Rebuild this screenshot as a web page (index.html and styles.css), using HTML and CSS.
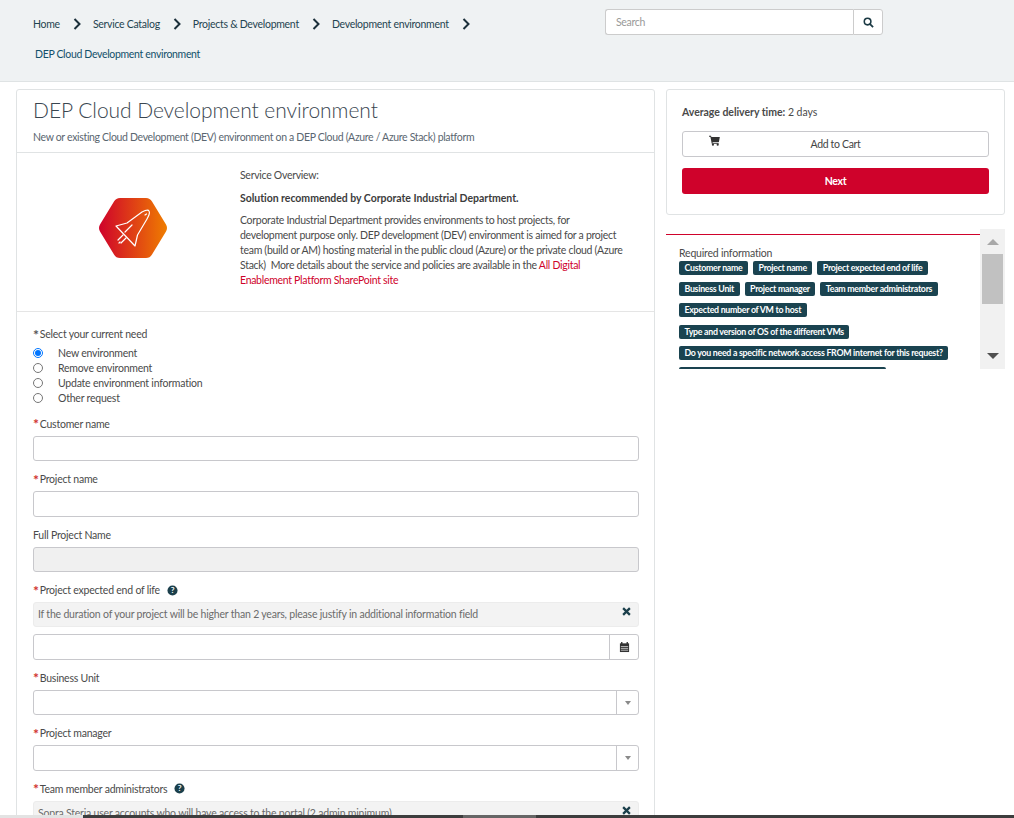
FILE: index.html
```html
<!DOCTYPE html>
<html lang="en">
<head>
    <meta charset="UTF-8">
    <title>DEP Cloud Development environment</title>
    <link rel="stylesheet" href="styles.css">
</head>
<body>
    <header class="topbar">
        <nav class="crumbs">
            <div class="crumb-row">
                <a>Home</a><svg class="chev" viewBox="0 0 8 12"><path d="M1.5 1l5 5-5 5" /></svg>
                <a>Service Catalog</a><svg class="chev" viewBox="0 0 8 12"><path d="M1.5 1l5 5-5 5" /></svg>
                <a>Projects &amp; Development</a><svg class="chev" viewBox="0 0 8 12"><path d="M1.5 1l5 5-5 5" /></svg>
                <a>Development environment</a><svg class="chev" viewBox="0 0 8 12"><path d="M1.5 1l5 5-5 5" /></svg>
            </div>
            <div class="crumb-current">DEP Cloud Development environment</div>
        </nav>
        <div class="search">
            <input class="search-input" type="text" placeholder="Search">
            <button class="search-btn">
                <svg viewBox="0 0 12 12" width="11" height="11"><circle cx="5" cy="5" r="3.6" fill="none" stroke="#1b3a44" stroke-width="1.7"/><path d="M7.7 7.7l3.3 3.3" stroke="#1b3a44" stroke-width="2"/></svg>
            </button>
        </div>
    </header>

    <main class="page">
        <section class="card main-card">
            <div class="card-head">
                <h1>DEP Cloud Development environment</h1>
                <p>New or existing Cloud Development (DEV) environment on a DEP Cloud (Azure / Azure Stack) platform</p>
            </div>
            <div class="overview">
                <div class="logo-col">
                    <svg width="68" height="60" viewBox="0 0 68 60">
                        <defs>
                            <linearGradient id="hexfill" x1="0" y1="0" x2="1" y2="0">
                                <stop offset="0" stop-color="#cf022b"/>
                                <stop offset="1" stop-color="#ef7d00"/>
                            </linearGradient>
                        </defs>
                        <path d="M21 0h26q4 0 6 3.500l14 23q2 3.500 0 7l-14 23q-2 3.500-6 3.500h-26q-4 0-6-3.500l-14-23q-2-3.500 0-7l14-23q2-3.500 6-3.500z" fill="url(#hexfill)"/>
                        <g fill="none" stroke="#fff" stroke-width="1.200" stroke-linejoin="round" stroke-linecap="round">
                            <path d="M17 28L28 25 43 14Q49 11 50 13 51.500 15 48 21L38.500 37 36 48z"/>
                            <path d="M33 27l-7 7M46 17l1.500-1"/>
                            <path d="M19 42l5-5M22 45l5-5M20 45l1-1"/>
                        </g>
                    </svg>
                </div>
                <div class="overview-text">
                    <p>Service Overview:</p>
                    <p class="solution"><strong>Solution recommended by Corporate Industrial Department.</strong></p>
                    <p>Corporate Industrial Department provides environments to host projects, for<br>development purpose only. DEP development (DEV) environment is aimed for a project team (build or AM) hosting material in the public cloud (Azure) or the private cloud (Azure Stack)&nbsp; More details about the service and policies are available in the <a>All Digital Enablement Platform SharePoint site</a></p>
                </div>
            </div>
            <form class="form">
                <div class="field need">
                    <label><span class="star grey">*</span>Select your current need</label>
                    <div class="radio"><input type="radio" name="need" checked><span>New environment</span></div>
                    <div class="radio"><input type="radio" name="need"><span>Remove environment</span></div>
                    <div class="radio"><input type="radio" name="need"><span>Update environment information</span></div>
                    <div class="radio"><input type="radio" name="need"><span>Other request</span></div>
                </div>
                <div class="field">
                    <label><span class="star">*</span>Customer name</label>
                    <div class="control"></div>
                </div>
                <div class="field">
                    <label><span class="star">*</span>Project name</label>
                    <div class="control"></div>
                </div>
                <div class="field">
                    <label>Full Project Name</label>
                    <div class="control disabled"></div>
                </div>
                <div class="field">
                    <label><span class="star">*</span>Project expected end of life
                        <svg class="help" viewBox="0 0 12 12"><circle cx="6" cy="6" r="5.500"/><text x="6" y="9.200" text-anchor="middle">?</text></svg>
                    </label>
                    <div class="hint">If the duration of your project will be higher than 2 years, please justify in additional information field
                        <svg class="close" viewBox="0 0 8 8"><path d="M1 1l6 6M7 1l-6 6"/></svg>
                    </div>
                    <div class="control with-addon">
                        <span class="addon">
                            <svg viewBox="0 0 12 12" width="11" height="12"><path d="M1 2h10v9.500H1z" fill="#333"/><path d="M3 .5v2.500M9 .5v2.500" stroke="#333" stroke-width="1.500"/><path d="M2 5.500h8M2 7.500h8M2 9.500h8" stroke="#fff" stroke-width=".7"/></svg>
                        </span>
                    </div>
                </div>
                <div class="field">
                    <label><span class="star">*</span>Business Unit</label>
                    <div class="control select"><span class="addon small"><i class="caret"></i></span></div>
                </div>
                <div class="field">
                    <label><span class="star">*</span>Project manager</label>
                    <div class="control select"><span class="addon small"><i class="caret"></i></span></div>
                </div>
                <div class="field">
                    <label><span class="star">*</span>Team member administrators
                        <svg class="help" viewBox="0 0 12 12"><circle cx="6" cy="6" r="5.500"/><text x="6" y="9.200" text-anchor="middle">?</text></svg>
                    </label>
                    <div class="hint">Sopra Steria user accounts who will have access to the portal (2 admin minimum)
                        <svg class="close" viewBox="0 0 8 8"><path d="M1 1l6 6M7 1l-6 6"/></svg>
                    </div>
                </div>
            </form>
        </section>

        <aside class="side">
            <section class="card order">
                <p class="delivery"><strong>Average delivery time:</strong> 2 days</p>
                <button class="btn-cart">
                    <svg viewBox="0 0 12 12" width="11" height="11"><path d="M0 .8h2.200l.4 1.400H11.800l-1 5.300H3.800l.3 1H10.500v1H3L1.500 1.800H0z" fill="#333"/><circle cx="4.300" cy="10.600" r="1.200" fill="#333"/><circle cx="9.500" cy="10.600" r="1.200" fill="#333"/></svg>
                    Add to Cart
                </button>
                <button class="btn-next">Next</button>
            </section>
            <section class="required">
                <div class="required-body">
                    <div class="required-title">Required information</div>
                    <div class="tags">
                        <span class="tag">Customer name</span>
                        <span class="tag">Project name</span>
                        <span class="tag">Project expected end of life</span>
                        <span class="tag">Business Unit</span>
                        <span class="tag">Project manager</span>
                        <span class="tag">Team member administrators</span>
                        <span class="tag">Expected number of VM to host</span>
                        <span class="tag">Type and version of OS of the different VMs</span>
                        <span class="tag">Do you need a specific network access FROM internet for this request?</span>
                        <span class="tag">Do you need specific network access TO the internet?</span>
                    </div>
                </div>
                <div class="scrollbar">
                    <i class="arrow up"></i>
                    <div class="track"><div class="thumb"></div></div>
                    <i class="arrow down"></i>
                </div>
            </section>
        </aside>
    </main>

    <div class="bottom-strip">
        <span class="strip-start"></span>
        <span class="strip-dark"></span>
        <span class="strip-mid"></span>
        <span class="strip-end"></span>
    </div>
</body>
</html>
```

FILE: styles.css
```css
html, body {
    height: 100%;
    overflow: hidden;
}
body {
    margin: 0;
    font-family: "Lato", sans-serif;
    font-size: 10.5px;
    letter-spacing: -0.33px;
    color: #4a4a4a;
    background-color: #fff;
}
p {
    margin: 0;
}

/* barra superior */
.topbar {
    display: flex;
    height: 81px;
    background-color: #eff2f3;
    border-bottom: 1px solid #dfe3e4;
}
.crumbs {
    box-sizing: border-box;
    width: 605px;
    padding: 17px 0 0 33px;
    letter-spacing: -0.28px;
    color: #1f4450;
}
.crumb-row {
    display: flex;
    align-items: center;
    height: 14px;
}
.chev {
    width: 8px;
    height: 12px;
    margin: 0 12px 0 13px;
    fill: none;
    stroke: #1b2f3a;
    stroke-width: 2;
}
.crumb-current {
    margin: 17px 0 0 2px;
    letter-spacing: -0.33px;
    color: #12506a;
}
.search {
    display: flex;
    width: 278px;
    height: 26px;
    margin-top: 9px;
}
.search-input {
    flex: 1;
    min-width: 0;
    padding: 0 10px;
    font: inherit;
    letter-spacing: inherit;
    border: 1px solid #ccc;
    border-right: none;
    border-radius: 3px 0 0 3px;
}
.search-input::placeholder {
    color: #999;
}
.search-btn {
    display: flex;
    align-items: center;
    justify-content: center;
    width: 30px;
    padding: 0;
    background-color: #fff;
    border: 1px solid #ccc;
    border-radius: 0 3px 3px 0;
}

/* contenido */
.page {
    display: flex;
    align-items: flex-start;
    padding: 7px 9px 0 16px;
    gap: 11px;
}
.card {
    background-color: #fff;
    border: 1px solid #e0e3e4;
    border-radius: 3px;
}
.main-card {
    width: 637px;
    flex: none;
}
.card-head {
    height: 62px;
    padding: 0 16px;
    border-bottom: 1px solid #e0e3e4;
}
.card-head h1 {
    margin: 0;
    padding-top: 6px;
    font-size: 21px;
    line-height: 27px;
    font-weight: 300;
    letter-spacing: -0.06px;
    color: #3a4650;
}
.card-head p {
    margin-top: 8px;
    color: #5a6670;
}
.overview {
    display: flex;
    height: 158px;
    border-bottom: 1px solid #e5e5e5;
}
.logo-col {
    width: 223px;
    padding: 45px 0 0 82px;
    box-sizing: border-box;
}
.overview-text {
    width: 392px;
    padding-top: 15px;
    letter-spacing: -0.29px;
}
.overview-text p {
    margin-bottom: 8px;
    line-height: 15px;
}
.overview-text .solution {
    margin-bottom: 7px;
}
.overview-text strong {
    letter-spacing: -0.03px;
    color: #3c3c3c;
}
.overview-text a {
    color: #cf022b;
}

/* formulario */
.form {
    padding: 13px 15px 0 16px;
    letter-spacing: -0.22px;
}
.field {
    margin-bottom: 9px;
}
.field label {
    box-sizing: border-box;
    display: flex;
    align-items: center;
    height: 16px;
    margin-bottom: 5px;
    padding-top: 2px;
}
.star {
    margin-right: 1px;
    font-size: 14px;
    font-weight: 700;
    color: #d0312d;
    line-height: 11px;
}
.star.grey {
    color: #555;
}
.help {
    width: 11px;
    height: 11px;
    margin-left: 7px;
}
.help circle {
    fill: #1b3f4b;
}
.help text {
    fill: #fff;
    font-size: 9px;
    font-weight: 700;
}
.radio {
    display: flex;
    align-items: center;
    height: 15px;
}
.radio input {
    width: 10px;
    height: 10px;
    margin: 0 15px 0 0;
}
.need label {
    margin-bottom: 4px;
}
.need {
    margin-bottom: 9.75px;
}
.control {
    box-sizing: border-box;
    display: flex;
    justify-content: flex-end;
    height: 25.5px;
    border: 1px solid #c8c8cc;
    border-radius: 3px;
}
.control.disabled {
    background-color: #f0f0f0;
}
.addon {
    display: flex;
    align-items: center;
    justify-content: center;
    width: 28px;
    border-left: 1px solid #c8c8cc;
}
.addon.small {
    width: 21px;
}
.caret {
    width: 0;
    height: 0;
    border-left: 3px solid transparent;
    border-right: 3px solid transparent;
    border-top: 4px solid #8a8a8a;
}
.hint {
    box-sizing: border-box;
    position: relative;
    height: 25px;
    margin-bottom: 7px;
    padding-left: 4px;
    line-height: 22px;
    letter-spacing: -0.2px;
    color: #6b6b6b;
    background-color: #f3f3f3;
    border: 1px solid #ececec;
    border-radius: 3px;
}
.close {
    position: absolute;
    top: 4px;
    right: 7px;
    width: 9px;
    height: 9px;
    fill: none;
    stroke: #1b3f4b;
    stroke-width: 2;
}

/* columna derecha */
.side {
    width: 339px;
    flex: none;
}
.order {
    height: 124px;
    padding: 0 15px;
}
.delivery {
    padding-top: 15px;
    line-height: 15px;
    letter-spacing: -0.03px;
}
.btn-cart {
    position: relative;
    display: block;
    width: 100%;
    height: 26px;
    margin-top: 11px;
    font: inherit;
    letter-spacing: inherit;
    color: #444;
    background-color: #fff;
    border: 1px solid #c8c8cc;
    border-radius: 3px;
}
.btn-cart svg {
    position: absolute;
    left: 26px;
    top: 3px;
}
.btn-next {
    display: block;
    width: 100%;
    height: 26px;
    margin-top: 11px;
    font: inherit;
    font-weight: 700;
    letter-spacing: inherit;
    color: #fff;
    background-color: #cf022b;
    border: none;
    border-radius: 3px;
}
.required {
    display: flex;
    height: 140px;
    margin-top: 14px;
    overflow: hidden;
}
.required-body {
    width: 314px;
    margin-top: 5px;
    padding: 11px 0 0 13px;
    box-sizing: border-box;
    border-top: 1px solid #cf022b;
    overflow: hidden;
}
.required-title {
    line-height: 14px;
    margin-bottom: 1px;
    letter-spacing: -0.2px;
}
.tags {
    display: flex;
    flex-wrap: wrap;
    column-gap: 5px;
    row-gap: 7.2px;
}
.tag {
    height: 14px;
    padding: 0 5.5px;
    font-size: 8.8px;
    font-weight: 700;
    letter-spacing: -0.28px;
    line-height: 14px;
    color: #fff;
    background-color: #1a4350;
    border-radius: 2px;
    white-space: nowrap;
}
.scrollbar {
    display: flex;
    flex-direction: column;
    align-items: center;
    width: 25px;
    background-color: #f1f1f1;
}
.track {
    flex: 1;
    width: 21px;
    padding-top: 9px;
}
.thumb {
    height: 50px;
    background-color: #c1c1c1;
}
.arrow {
    width: 0;
    height: 0;
    border-left: 6px solid transparent;
    border-right: 6px solid transparent;
}
.arrow.up {
    margin-top: 10px;
    border-bottom: 6px solid #a8a8a8;
}
.arrow.down {
    margin-bottom: 10px;
    border-top: 6px solid #505050;
}

/* franja inferior, sobre el contenido */
.bottom-strip {
    position: fixed;
    left: 0;
    right: 0;
    bottom: 0;
    display: flex;
    height: 3px;
}
.strip-start {
    width: 83px;
    background-color: #e3e3e3;
}
.strip-dark {
    width: 380px;
    background-color: #3d3d3d;
}
.strip-mid {
    width: 73px;
    background-color: #666;
}
.strip-end {
    flex: 1;
    background-color: #3d3d3d;
}
```
